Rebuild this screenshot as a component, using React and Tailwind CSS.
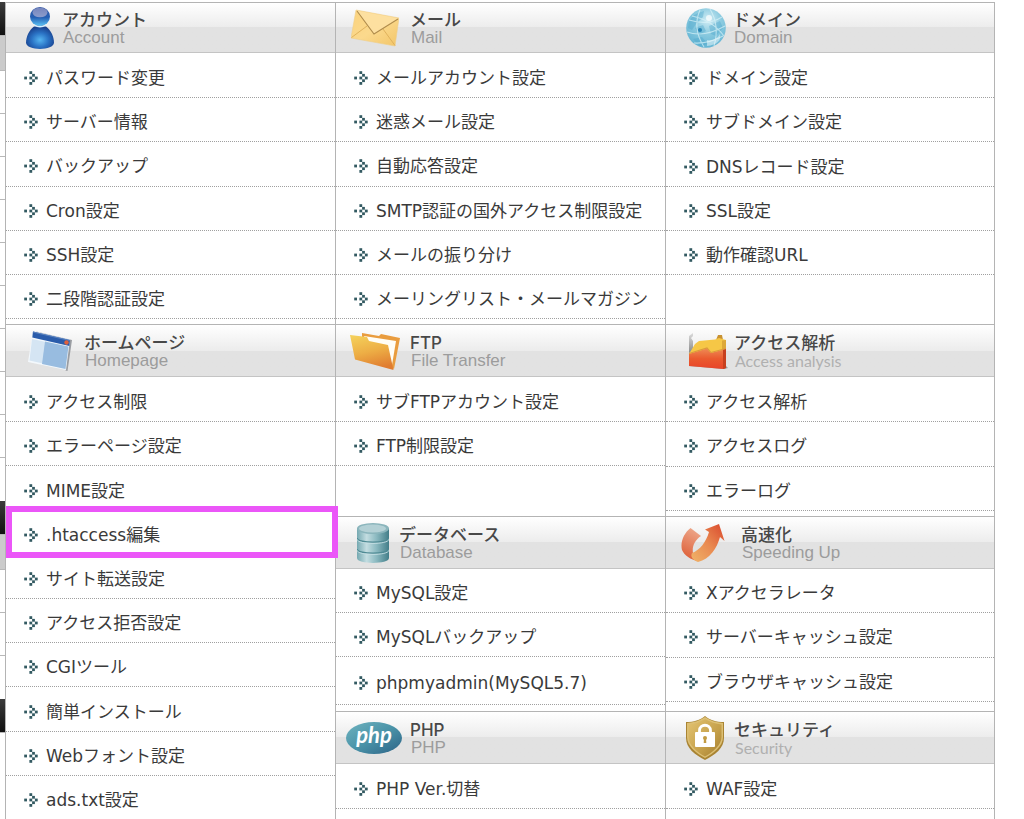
import React from 'react';

function ArrowDots() {
  return (
    <svg viewBox="0 0 14 14" className="h-3.5 w-3.5 shrink-0 fill-[#335a62]" aria-hidden="true">
      <rect x="0.2" y="5.600" width="2.800" height="2.800" />
      <rect x="5.400" y="0.2" width="2.800" height="2.800" />
      <rect x="8.100" y="2.900" width="2.800" height="2.800" />
      <rect x="5.400" y="5.600" width="2.800" height="2.800" />
      <rect x="10.900" y="5.600" width="2.800" height="2.800" />
      <rect x="8.100" y="8.300" width="2.800" height="2.800" />
      <rect x="5.400" y="11" width="2.800" height="2.800" />
    </svg>
  );
}

function PersonIcon() {
  return (
    <svg viewBox="0 0 28 42" className="h-[42px] w-7 shrink-0" aria-hidden="true">
      <defs>
        <radialGradient id="pBody" cx=".5" cy=".62" r=".6">
          <stop offset="0" stopColor="#55b4f0" />
          <stop offset=".5" stopColor="#2a72c4" />
          <stop offset="1" stopColor="#173a86" />
        </radialGradient>
        <linearGradient id="pHead" x2="0" y2="1">
          <stop offset="0" stopColor="#3557a4" />
          <stop offset=".55" stopColor="#2560b4" />
          <stop offset="1" stopColor="#5cc4f6" />
        </linearGradient>
        <linearGradient id="pShine" x2="0" y2="1">
          <stop offset="0" stopColor="#7585bd" />
          <stop offset="1" stopColor="#8c9ccb" />
        </linearGradient>
      </defs>
      <path d="M8 19.500 C3 23 0 30 0 35.500 C0 44 28 44 28 35.500 C28 30 25 23 20 19.500 C17 18 11 18 8 19.500Z" fill="url(#pBody)" />
      <ellipse cx="14" cy="9.500" rx="10" ry="9.500" fill="url(#pHead)" />
      <ellipse cx="14" cy="5.500" rx="7.500" ry="4.800" fill="url(#pShine)" />
      <path d="M8 18.500 Q14 21 20 18.500" stroke="#d6f1ff" strokeWidth="1.300" fill="none" />
    </svg>
  );
}

function MailIcon() {
  return (
    <svg viewBox="0 0 48 38" className="h-[38px] w-12 shrink-0" aria-hidden="true">
      <defs>
        <linearGradient id="mEnv" x2="1" y2="1">
          <stop offset="0" stopColor="#fbd27c" />
          <stop offset=".5" stopColor="#fbd98d" />
          <stop offset="1" stopColor="#f2c568" />
        </linearGradient>
      </defs>
      <path d="M5 1 L48 9 L44 37 L0 29Z" fill="url(#mEnv)" stroke="#f0cf88" strokeWidth=".6" />
      <path d="M5.500 1.500 L23 25 L47.500 9.500Z" fill="#fde0a0" />
      <path d="M0.500 28.500 L16 17 M44 36.500 L32 20" stroke="#dcae58" strokeWidth=".9" />
      <path d="M6 2 L23 25 L47 10" stroke="#b08c4c" strokeWidth="1.100" fill="none" />
    </svg>
  );
}

function GlobeIcon() {
  return (
    <svg viewBox="0 0 40 40" className="h-10 w-10 shrink-0" aria-hidden="true">
      <defs>
        <radialGradient id="gBall" cx=".55" cy=".3" r=".75">
          <stop offset="0" stopColor="#d2edf5" />
          <stop offset=".45" stopColor="#8ccbe0" />
          <stop offset="1" stopColor="#5fb2d2" />
        </radialGradient>
      </defs>
      <circle cx="20" cy="20" r="19.800" fill="url(#gBall)" />
      <path d="M3 13 Q8 5 18 3 L17 9 L10 16 L6 22 L2 20Z M9 20 L17 17 L20 23 L13 27Z M23 18 L34 13 L37 20 L30 28 L25 26Z M7 31 L16 29 L22 36 L14 38Z" fill="#4aa6ca" opacity=".4" />
      <path d="M1 24 Q18 30 39 18 M3 12 Q22 18 36 9 M8 35 Q22 36 37 28 M14 2 Q6 20 18 39 M24 1 Q34 18 28 38 M6 8 Q26 12 38 28" stroke="#d9f2f8" strokeWidth="1.100" fill="none" opacity=".7" />
      <circle cx="14" cy="22" r="2" fill="#2a86b4" />
      <circle cx="23" cy="10" r="3" fill="#fff" opacity=".7" />
      <path d="M21 32 Q30 33 34 26 Q36 36 21 38Z" fill="#f0fafc" opacity=".5" />
    </svg>
  );
}

function WindowIcon() {
  return (
    <svg viewBox="0 0 44 42" className="h-[42px] w-11 shrink-0" aria-hidden="true">
      <path d="M6 1 L44 10 L39.500 41 L37.500 40.500 L40 12Z" fill="#9a9da2" />
      <path d="M5 1 L42 9.500 L38 40 L0 32Z" fill="#f3f8fc" />
      <path d="M5 1.500 L42 10 L41.300 16 L4.300 7.500Z" fill="#2a5cab" />
      <path d="M5 1.500 L42 10 L41.800 11 L4.800 2.500Z" fill="#5d83bd" />
      <path d="M4 9 L18 12 L15 33.500 L1.500 30.500Z" fill="#d5e5f3" />
      <path d="M17 11.500 L40.500 16.500 L37.500 39 L14 34Z" fill="#98bce0" />
      <circle cx="38.500" cy="12.500" r="2.200" fill="#e0603c" />
    </svg>
  );
}

function FolderIcon() {
  return (
    <svg viewBox="0 0 50 38" className="h-[38px] w-[50px] shrink-0" aria-hidden="true">
      <defs>
        <linearGradient id="fFront" x1=".2" x2=".5" y2="1">
          <stop offset="0" stopColor="#f4cf5a" />
          <stop offset=".5" stopColor="#edae45" />
          <stop offset="1" stopColor="#e07c30" />
        </linearGradient>
      </defs>
      <path d="M12 1 L29 4 L31 2 L50 6 L44 37 L12 12Z" fill="#e99c3e" />
      <path d="M14 4 L46 9 L42 33 L18 18Z" fill="#fffdf6" />
      <path d="M0 3 L17 5 L19 9 L38 13 L43.500 38 L5 27.500Z" fill="url(#fFront)" />
    </svg>
  );
}

function ChartIcon() {
  return (
    <svg viewBox="0 0 40 38" className="h-[38px] w-10 shrink-0" aria-hidden="true">
      <defs>
        <linearGradient id="cRed" x2="0" y2="1">
          <stop offset="0" stopColor="#ee8a55" />
          <stop offset=".5" stopColor="#ea5a2e" />
          <stop offset="1" stopColor="#e8442a" />
        </linearGradient>
        <linearGradient id="cAxis" x2="0" y2="1">
          <stop offset="0" stopColor="#dcdcdc" />
          <stop offset="1" stopColor="#888" />
        </linearGradient>
      </defs>
      <path d="M1 4 L5 1 V4 L3 6 L5 9 V19 L1 21Z" fill="url(#cAxis)" />
      <path d="M1 34 L36 37 L40 36 L37 33Z" fill="#999" />
      <path d="M28 8 L30 3 L34 3 L35 8Z" fill="#c89232" />
      <path d="M1 22 L7 12 L11 9 L27 7.500 L31 6 L38 8 V22Z" fill="#f6c746" />
      <path d="M34 8.500 L38 8 V18 L34 19Z" fill="#dda838" />
      <path d="M1 22 L19 16.500 L23 21 L38 17 V36 L35 37 L1 34Z" fill="url(#cRed)" />
      <path d="M1 21.500 L19 16 L23 20.500 L38 16.500" fill="none" stroke="#dc9a3c" strokeWidth="1.100" />
      <path d="M35 18 L38 17 V36 L35 37Z" fill="#c7401f" />
    </svg>
  );
}

function DatabaseIcon() {
  return (
    <svg viewBox="0 0 32 40" className="h-10 w-8 shrink-0" aria-hidden="true">
      <defs>
        <linearGradient id="dSide">
          <stop offset="0" stopColor="#75a9b1" />
          <stop offset=".3" stopColor="#c3dde1" />
          <stop offset=".6" stopColor="#8cbac1" />
          <stop offset="1" stopColor="#437e89" />
        </linearGradient>
      </defs>
      <path d="M0 5 V35 C0 41.500 32 41.500 32 35 V5Z" fill="url(#dSide)" />
      <path d="M0 15 C1 20.500 31 20.500 32 15 M0 26 C1 31.500 31 31.500 32 26" stroke="#4f8a94" strokeWidth="1.300" fill="none" />
      <path d="M0 16.300 C1 21.800 31 21.800 32 16.300 M0 27.300 C1 32.800 31 32.800 32 27.300" stroke="#c5dfe3" strokeWidth=".9" fill="none" />
      <ellipse cx="16" cy="5.500" rx="16" ry="5.500" fill="#8bb5bc" />
      <ellipse cx="15.500" cy="5.500" rx="13.500" ry="4" fill="#b3d0d5" />
    </svg>
  );
}

function SpeedIcon() {
  return (
    <svg viewBox="0 0 44 38" className="h-[38px] w-11 shrink-0" aria-hidden="true">
      <defs>
        <linearGradient id="sLeft" x1=".6" x2=".3" y2="1">
          <stop offset="0" stopColor="#eda78a" />
          <stop offset="1" stopColor="#dd5c34" />
        </linearGradient>
        <linearGradient id="sRight" x1="0" y1="1" x2="1" y2="0">
          <stop offset="0" stopColor="#f0b469" />
          <stop offset=".5" stopColor="#e98950" />
          <stop offset="1" stopColor="#d9472c" />
        </linearGradient>
      </defs>
      <path d="M9.500 4 L20 12 C13 17 11 23 12 29 L17 37 C10 36 3 31 1 26 C-1 18 3 9 9.500 4Z" fill="url(#sLeft)" />
      <path d="M11 29 C19 26 25 18 28 8 L24 5.500 L38 0 L43.500 17 L39 13 C36 24 29 35 17 38 C12 36 9 33 11 29Z" fill="url(#sRight)" />
    </svg>
  );
}

function PhpIcon() {
  return (
    <svg viewBox="0 0 56 32" className="h-8 w-14 shrink-0" role="img" aria-label="php">
      <defs>
        <linearGradient id="phpBg" x2="1" y2="1">
          <stop offset="0" stopColor="#6fb3bf" />
          <stop offset=".5" stopColor="#4a93a8" />
          <stop offset="1" stopColor="#2c6286" />
        </linearGradient>
      </defs>
      <ellipse cx="28" cy="16" rx="28" ry="16" fill="url(#phpBg)" />
      <text x="28" y="21" textAnchor="middle" fontFamily="Lato, sans-serif" fontSize="22" fontWeight="700" fontStyle="italic" fill="#fff">php</text>
    </svg>
  );
}

function ShieldIcon() {
  return (
    <svg viewBox="0 0 38 44" className="h-11 w-[38px] shrink-0" aria-hidden="true">
      <defs>
        <linearGradient id="shGold" x2="1" y2="1">
          <stop offset="0" stopColor="#e3c371" />
          <stop offset=".6" stopColor="#c49f4a" />
          <stop offset="1" stopColor="#a47d2e" />
        </linearGradient>
      </defs>
      <path d="M19 0 C24 4 30 6 38 6 V22 C38 32 29 39 19 44 C9 39 0 32 0 22 V6 C8 6 14 4 19 0Z" fill="#a98433" />
      <path d="M19 1 C24 4.500 30 6.500 37 7 V21 C37 30 28 37 19 42 C10 37 1 30 1 21 V7 C8 6.500 14 4.500 19 1Z" fill="#dcbf74" />
      <path d="M19 3 C24 6 30 8 35.500 8.500 V21 C35.500 29 27 36 19 40.500 C11 36 2.500 29 2.500 21 V8.500 C9 8 14 6 19 3Z" fill="url(#shGold)" />
      <path d="M13.500 18 V14.500 C13.500 7.500 24.500 7.500 24.500 14.500 V18" fill="none" stroke="#fff" strokeWidth="2.800" />
      <rect x="9" y="16" width="20" height="15" rx="1" fill="#fff" />
      <circle cx="19" cy="22" r="2" fill="#c29b43" />
      <path d="M18 22 H20 L20.300 27 H17.700Z" fill="#c29b43" />
    </svg>
  );
}

const WIDE = "font-['Liberation_Sans',Arial,sans-serif] text-[17px] text-[#9c9c9c]";
const NARROW = "font-['Lato',sans-serif] text-base text-[#b0b0b0]";

const SECTIONS = [
  {
    title: 'アカウント', sub: 'Account', Icon: PersonIcon, head: 'h-[50px] pl-5 gap-2', subStyle: WIDE, list: 'min-h-[266px] pt-px',
    items: ['パスワード変更', 'サーバー情報', 'バックアップ', 'Cron設定', 'SSH設定', '二段階認証設定'],
  },
  {
    title: 'メール', sub: 'Mail', Icon: MailIcon, head: 'h-[50px] pl-[15px] gap-[11px]', subStyle: WIDE, list: 'min-h-[266px] pt-px',
    items: ['メールアカウント設定', '迷惑メール設定', '自動応答設定', 'SMTP認証の国外アクセス制限設定', 'メールの振り分け', 'メーリングリスト・メールマガジン'],
  },
  {
    title: 'ドメイン', sub: 'Domain', Icon: GlobeIcon, head: 'h-[50px] pl-5 gap-[7px]', subStyle: WIDE, list: 'min-h-[222px] pt-px', last: true,
    items: ['ドメイン設定', 'サブドメイン設定', 'DNSレコード設定', 'SSL設定', '動作確認URL'],
  },
  {
    title: 'ホームページ', sub: 'Homepage', Icon: WindowIcon, head: 'h-[52px] pl-[22px] gap-3', subStyle: WIDE, list: 'min-h-[443px] pt-px', span: 'row-span-3',
    items: ['アクセス制限', 'エラーページ設定', 'MIME設定', '.htaccess編集', 'サイト転送設定', 'アクセス拒否設定', 'CGIツール', '簡単インストール', 'Webフォント設定', 'ads.txt設定'],
  },
  {
    title: 'FTP', sub: 'File Transfer', Icon: FolderIcon, head: 'h-[52px] pl-3.5 gap-2.5', subStyle: WIDE, list: 'min-h-[89px] pt-px',
    items: ['サブFTPアカウント設定', 'FTP制限設定'],
  },
  {
    title: 'アクセス解析', sub: 'Access analysis', Icon: ChartIcon, head: 'h-[52px] pl-[22px] gap-1.5', subStyle: NARROW, list: 'min-h-[134px] pt-px', last: true,
    items: ['アクセス解析', 'アクセスログ', 'エラーログ'],
  },
  {
    title: 'データベース', sub: 'Database', Icon: DatabaseIcon, head: 'h-[52px] pl-[21px] gap-2.5', subStyle: WIDE, list: 'min-h-[136px]',
    items: ['MySQL設定', 'MySQLバックアップ', 'phpmyadmin(MySQL5.7)'],
  },
  {
    title: '高速化', sub: 'Speeding Up', Icon: SpeedIcon, head: 'h-[52px] pl-[15px] gap-4', subStyle: WIDE, list: 'min-h-[133px]', last: true,
    items: ['Xアクセラレータ', 'サーバーキャッシュ設定', 'ブラウザキャッシュ設定'],
  },
  {
    title: 'PHP', sub: 'PHP', Icon: PhpIcon, head: 'h-[52px] pl-2.5 gap-2', subStyle: WIDE, list: 'min-h-[45px]',
    items: ['PHP Ver.切替'],
  },
  {
    title: 'セキュリティ', sub: 'Security', Icon: ShieldIcon, head: 'h-[52px] pl-5 gap-2.5', subStyle: NARROW, list: 'min-h-[45px]', last: true,
    items: ['WAF設定'],
  },
];

function MenuItem({ label }) {
  const marked = label === '.htaccess編集';
  const tall = label.startsWith('phpmyadmin');
  return (
    <li className={`relative flex border-b border-dotted border-[#a0a0a0] ${tall ? 'h-12 shrink-0' : 'flex-1'}`}>
      <a href="#" className="flex flex-1 items-center gap-2 whitespace-nowrap pl-[18px] pt-[5px] text-[17px] leading-6 text-[#3a3a3a]">
        <ArrowDots />
        {label}
      </a>
      {marked && <span className="pointer-events-none absolute -bottom-1 -right-[3px] -top-[5px] left-0 z-10 border-[6px] border-[#eb56f8]" />}
    </li>
  );
}

function Section({ title, sub, Icon, head, subStyle, list, span, last, items }) {
  return (
    <section className={`border-l border-t border-[#b4b4b4] ${span || ''} ${last ? 'border-r' : ''}`}>
      <header className={`flex items-center border-b border-[#c4c4c4] bg-linear-to-b from-white via-[#ececec] via-50% to-[#e2e2e2] to-50% ${head}`}>
        <Icon />
        <div className="pt-0.5">
          <h2 className="font-['Inter','Noto_Sans_CJK_JP',sans-serif] text-[17px] font-medium leading-[18px] text-[#484848]">{title}</h2>
          <p className={`pl-px leading-[18px] ${subStyle}`}>{sub}</p>
        </div>
      </header>
      <ul className={`flex flex-col ${list}`}>
        {items.map((label) => <MenuItem key={label} label={label} />)}
      </ul>
    </section>
  );
}

const STRIP = [
  'h-[34px] bg-linear-to-b from-[#3c3c3c] to-[#111]',
  'h-[35px] bg-[#cbcbcb]',
  'h-[43px]', 'h-[43px]', 'h-[43px]', 'h-[43px]', 'h-[43px]', 'h-[43px]', 'h-[43px]', 'h-[43px]', 'h-[43px]',
  'h-[43px] border-b-0',
  'h-[34px] bg-linear-to-b from-[#3c3c3c] to-[#111]',
  'h-[35px] bg-[#cbcbcb]',
  'h-[43px]', 'h-[43px]',
  'h-[43px] border-b-0',
  'h-[34px] bg-linear-to-b from-[#3c3c3c] to-[#111]',
];

export default function App() {
  return (
    <div className="flex bg-white pt-0.5 font-['DejaVu_Sans','Noto_Sans_CJK_JP',sans-serif]">
      <aside className="w-[5px] shrink-0" aria-hidden="true">
        {STRIP.map((style, i) => <div key={i} className={`border-b border-[#b8b8b8] ${style}`} />)}
      </aside>
      <main className="mr-[29px] grid min-w-0 flex-1 grid-cols-3 grid-rows-[322px_192px_195px_auto]">
        {SECTIONS.map((s) => <Section key={s.title} {...s} />)}
      </main>
    </div>
  );
}
